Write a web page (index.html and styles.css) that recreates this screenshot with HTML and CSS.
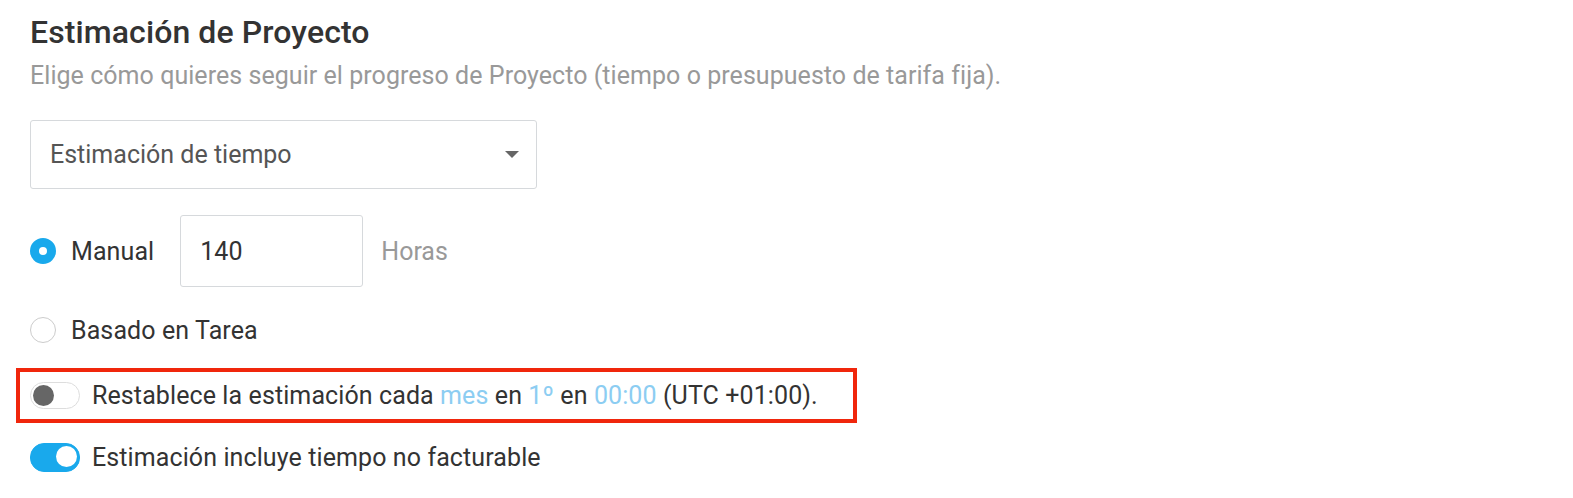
FILE: index.html
```html
<!DOCTYPE html>
<html>
    <head>
        <meta charset="utf-8">
        <title>Estimación de Proyecto</title>
        <link rel="stylesheet" href="styles.css">
    </head>
    <body>
        <div class="estimate">
            <h2 class="title">Estimación de Proyecto</h2>
            <p class="hint">Elige cómo quieres seguir el progreso de Proyecto (tiempo o presupuesto de tarifa fija).</p>

            <div class="select">
                <span>Estimación de tiempo</span>
                <span class="caret"></span>
            </div>

            <div class="row manual">
                <span class="radio checked"></span>
                <span class="label">Manual</span>
                <div class="field">140</div>
                <span class="unit">Horas</span>
            </div>

            <div class="row task">
                <span class="radio"></span>
                <span class="label">Basado en Tarea</span>
            </div>

            <div class="row reset">
                <span class="toggle"></span>
                <span class="label">Restablece la estimación cada <a>mes</a> en <a>1º</a> en <a>00:00</a> (UTC +01:00).</span>
            </div>

            <div class="row billable">
                <span class="toggle on"></span>
                <span class="label">Estimación incluye tiempo no facturable</span>
            </div>
        </div>
    </body>
</html>
```

FILE: styles.css
```css
body {
    margin: 0;
    background-color: white;
    color: #333;
    font-family: Roboto, "Liberation Sans", sans-serif;
}

div.estimate {
    padding: 12px 30px 0 30px;
    display: flex;
    flex-direction: column;
    align-items: flex-start;
}

h2.title {
    margin: 0;
    font-size: 32px;
    font-weight: 500;
    line-height: 40px;
    letter-spacing: 0.1px;
    color: #333;
}

p.hint {
    margin: 9px 0 0 0;
    font-size: 25px;
    line-height: 30px;
    letter-spacing: 0.05px;
    color: #999;
}

div.select {
    margin-top: 29px;
    box-sizing: border-box;
    width: 507px;
    height: 69px;
    padding: 0 19px;
    border: solid 1px #d6d9dc;
    border-radius: 3px;
    display: flex;
    align-items: center;
    justify-content: space-between;
    font-size: 25px;
    color: #555;
}

span.caret {
    width: 0;
    height: 0;
    border-left: 7px solid transparent;
    border-right: 7px solid transparent;
    border-top: 7px solid #666;
    margin-right: -2px;
}

div.row {
    display: flex;
    align-items: center;
    font-size: 25px;
}

div.row.manual {
    margin-top: 26px;
}

div.row.task {
    margin-top: 7px;
    height: 72px;
}

div.row.reset {
    box-sizing: border-box;
    margin: 2px 0 0 -14px;
    padding: 0 35px 0 10px;
    height: 55px;
    border: solid 4px #f0260c;
}

div.row.billable {
    margin-top: 19px;
    height: 30px;
}

span.radio {
    box-sizing: border-box;
    width: 26px;
    height: 26px;
    border-radius: 50%;
    border: solid 1px #ccc;
    margin-right: 15px;
}

span.radio.checked {
    border: solid 9px #19a9ec;
}

span.label {
    white-space: nowrap;
    letter-spacing: 0.1px;
}

span.label a {
    color: #8ccdf2;
}

div.field {
    box-sizing: border-box;
    width: 183px;
    height: 72px;
    margin-left: 26px;
    padding: 0 19px;
    border: solid 1px #d6d9dc;
    border-radius: 3px;
    display: flex;
    align-items: center;
}

span.unit {
    margin-left: 18px;
    color: #999;
}

span.toggle {
    position: relative;
    box-sizing: border-box;
    width: 50px;
    height: 27px;
    border-radius: 14px;
    border: solid 1px #ddd;
    background-color: white;
    margin-right: 12px;
}

span.toggle::after {
    content: "";
    position: absolute;
    left: 2px;
    top: 2px;
    width: 21px;
    height: 21px;
    border-radius: 50%;
    background-color: #666;
}

span.toggle.on {
    height: 29px;
    border-color: #19a9ec;
    background-color: #19a9ec;
}

span.toggle.on::after {
    left: auto;
    right: 2px;
    background-color: white;
}
```
